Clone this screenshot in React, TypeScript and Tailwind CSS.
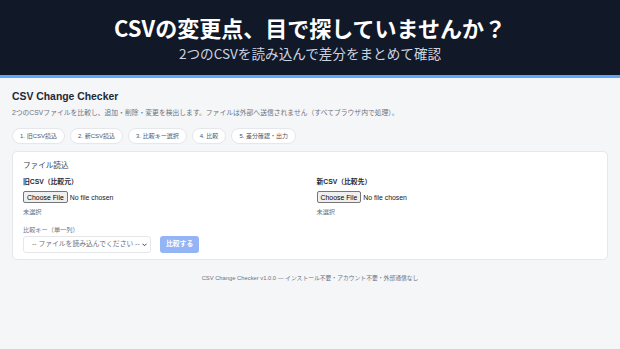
const steps = ["1. 旧CSV読込", "2. 新CSV読込", "3. 比較キー選択", "4. 比較", "5. 差分確認・出力"]

function FilePicker({ label }: { label: string }) {
  return (
    <div className="flex flex-col">
      <div className="text-[6.8px] leading-[10px] font-bold text-[#1f2937]">{label}</div>
      <input
        type="file"
        className="mt-[4px] h-[12px] text-[6.9px] leading-[12px] text-[#111827] file:mr-[2px] file:h-[12px] file:rounded-[2px] file:border file:border-[#767676] file:bg-[#efefef] file:px-[3px] file:text-[#000]"
      />
      <div className="mt-[5px] text-[6.2px] leading-[8px] text-[#6b7280]">未選択</div>
    </div>
  )
}

export default function App() {
  return (
    <div className="min-h-[349px] bg-[#f5f6f8] font-['Liberation_Sans','Noto_Sans_CJK_JP',sans-serif]">
      <header className="h-[78px] border-b-[3px] border-[#60a5fa] bg-[#111827] pt-[12px] text-center font-['Noto_Sans_CJK_JP',sans-serif]">
        <h1 className="text-[22px] leading-[30px] font-bold text-white">CSVの変更点、目で探していませんか？</h1>
        <p className="mt-[4px] text-[13.6px] leading-[14px] text-[#cbd5e1]">2つのCSVを読み込んで差分をまとめて確認</p>
      </header>

      <main className="px-[12px] pt-[12px]">
        <h2 className="text-[10.4px] leading-[14px] font-bold text-[#1f2937]">CSV Change Checker</h2>
        <p className="mt-[4px] text-[6.8px] leading-[10px] text-[#6b7280]">
          2つのCSVファイルを比較し、追加・削除・変更を検出します。ファイルは外部へ送信されません（すべてブラウザ内で処理）。
        </p>

        <div className="mt-[10px] flex gap-[5px]">
          {steps.map((s) => (
            <span
              key={s}
              className="flex h-[16px] items-center rounded-full border border-[#e5e7eb] bg-white px-[7px] text-[6px] text-[#4b5563]"
            >
              {s}
            </span>
          ))}
        </div>

        <section className="mt-[7px] rounded-[5px] border border-[#e5e7eb] bg-white px-[10px] pt-[9px] pb-[6px]">
          <h3 className="text-[7.6px] leading-[10px] text-[#374151]">ファイル読込</h3>
          <div className="mt-[6px] grid grid-cols-2 gap-[13px]">
            <FilePicker label="旧CSV（比較元）" />
            <FilePicker label="新CSV（比較先）" />
          </div>

          <div className="mt-[10px] text-[6.2px] leading-[8px] text-[#6b7280]">比較キー（単一列）</div>
          <div className="mt-[2px] flex items-center gap-[9px]">
            <div className="relative h-[17px] w-[128px]">
              <select className="block h-[17px] w-[128px] appearance-none rounded-[3px] border border-[#e5e7eb] bg-white pl-[8px] text-[6.8px] text-[#6b7280]">
                <option>-- ファイルを読み込んでください --</option>
              </select>
              <svg
                className="pointer-events-none absolute top-[7px] right-[4px]"
                width="5"
                height="4"
                viewBox="0 0 10 7"
                fill="none"
                stroke="#374151"
                strokeWidth="2"
              >
                <path d="M1 1l4 4 4-4" />
              </svg>
            </div>
            <button className="h-[17px] rounded-[3px] bg-[#93b4f5] px-[6px] text-[6.8px] font-bold text-white">比較する</button>
          </div>
        </section>

        <footer className="mt-[14px] text-center text-[5.8px] leading-[8px] text-[#6b7280]">
          CSV Change Checker v1.0.0 — インストール不要・アカウント不要・外部通信なし
        </footer>
      </main>
    </div>
  )
}
